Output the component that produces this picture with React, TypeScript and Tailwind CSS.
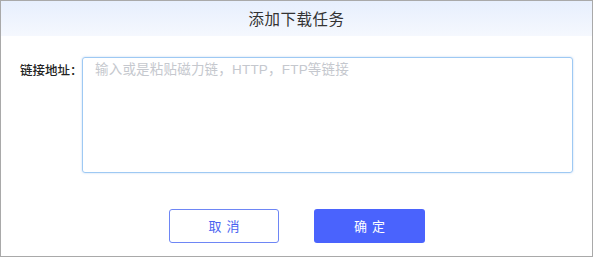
function App() {
  return (
    <div
      className="w-[593px] h-[257px] flex flex-col border border-[#a9a9a9] bg-white"
      style={{ fontFamily: '"Noto Sans CJK SC", "Noto Sans", sans-serif' }}>
      <div className="h-[35px] flex items-center justify-center bg-gradient-to-b from-[#e7effd] to-[#f5f8fe] text-[15.5px] text-[#333] tracking-[0.5px]">
        添加下载任务
      </div>

      <div className="flex pl-[19px] pr-[19px] pt-[21px]">
        <label className="w-[62px] shrink-0 whitespace-nowrap pt-[4px] text-[12.5px] font-medium text-[#222] leading-[18px]">
          链接地址：
        </label>
        <textarea
          placeholder="输入或是粘贴磁力链，HTTP，FTP等链接"
          className="flex-1 h-[116px] resize-none rounded-[3px] border border-[#9ec9f3] px-3 py-[2px] text-[13.5px] tracking-[0.2px] leading-[20px] text-[#333] placeholder:text-[#c5c8ce] outline-none shadow-[0_0_2px_rgba(120,170,230,0.5)]"
          style={{ fontFamily: '"Liberation Sans", "Noto Sans CJK SC", sans-serif' }}
        />
      </div>

      <div className="flex justify-center gap-[35px] pt-[36px] pl-[1px]">
        <button className="w-[110px] h-[34px] rounded-[3px] border border-[#6e86f5] bg-white text-[13px] text-[#4a63f0] tracking-[5px] indent-[5px]">
          取消
        </button>
        <button className="w-[111px] h-[34px] rounded-[3px] bg-[#4a63fd] text-[13px] text-white tracking-[5px] indent-[5px]">
          确定
        </button>
      </div>
    </div>
  );
}

export default App;
